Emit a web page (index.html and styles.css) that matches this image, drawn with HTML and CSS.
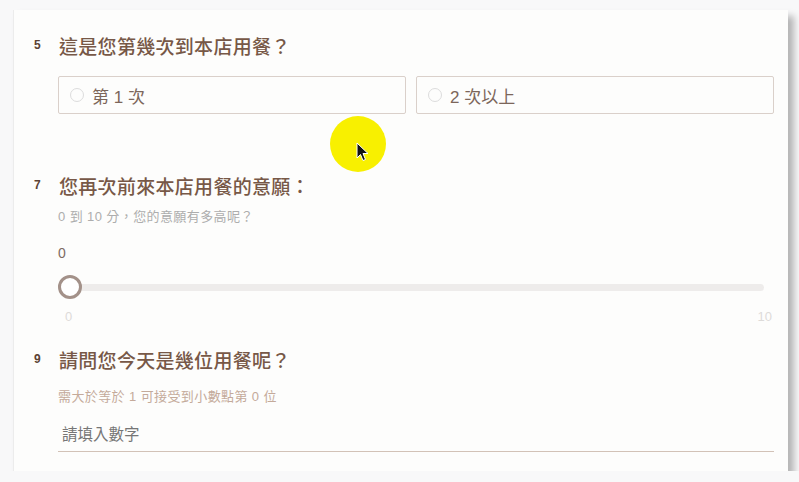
FILE: index.html
```html
<!DOCTYPE html>
<html lang="zh-Hant">
<head>
    <meta charset="UTF-8">
    <meta name="viewport" content="width=device-width, initial-scale=1.0">
    <title>用餐問卷</title>
    <link rel="stylesheet" href="styles.css">
</head>
<body>

    <main class="card">
        <!-- Q5 -->
        <section class="question">
            <div class="q-head">
                <span class="q-num">5</span>
                <h2 class="q-title">這是您第幾次到本店用餐？</h2>
            </div>
            <div class="q-body">
                <div class="options">
                    <label class="option"><span class="radio"></span>第 1 次</label>
                    <label class="option option-wide"><span class="radio"></span>2 次以上</label>
                </div>
            </div>
        </section>

        <!-- Q7 -->
        <section class="question q-slider">
            <div class="q-head">
                <span class="q-num">7</span>
                <h2 class="q-title">您再次前來本店用餐的意願：</h2>
            </div>
            <div class="q-body">
                <p class="q-hint">0 到 10 分，您的意願有多高呢？</p>
                <div class="slider-value">0</div>
                <div class="slider">
                    <div class="slider-track"></div>
                    <div class="slider-thumb"></div>
                </div>
                <div class="slider-labels">
                    <span>0</span>
                    <span>10</span>
                </div>
            </div>
        </section>

        <!-- Q9 -->
        <section class="question q-number">
            <div class="q-head">
                <span class="q-num">9</span>
                <h2 class="q-title">請問您今天是幾位用餐呢？</h2>
            </div>
            <div class="q-body">
                <p class="q-hint q-hint-warm">需大於等於 1 可接受到小數點第 0 位</p>
                <div class="number-input">請填入數字</div>
            </div>
        </section>

        <!-- click highlight from the screen recording -->
        <div class="click-spot">
            <svg class="cursor" width="14" height="20" viewBox="0 0 14 20">
                <path d="M1 1 L1 16 L4.5 12.5 L7 18.5 L9.5 17.5 L7 11.5 L12 11.5 Z" fill="#111" stroke="#fff" stroke-width="1"/>
            </svg>
        </div>
    </main>

</body>
</html>
```

FILE: styles.css
```css
:root {
    --title-color: #775847;
    --num-color: #5b4234;
    --option-text: #7c665a;
    --border-color: #dad0ca;
    --hint-color: #adadad;
    --hint-warm: #c4aa9a;
    --track-color: #eeeceb;
    --thumb-color: #a39189;
}

body {
    margin: 0;
    background: #f8f8f9;
    font-family: "Liberation Sans", "Noto Sans CJK TC", sans-serif;
}

.card {
    position: relative;
    width: 775px;
    height: 461px;
    box-sizing: border-box;
    margin: 10px 0 0 13px;
    padding: 21px 14px 0 20px;
    background: #fdfdfc;
    border-left: 1px solid #ececec;
    box-shadow: 6px 6px 7px rgba(0, 0, 0, 0.28);
}

.q-head {
    display: flex;
    align-items: center;
    height: 28px;
}

.q-num {
    width: 25px;
    font-size: 12px;
    font-weight: bold;
    color: var(--num-color);
}

.q-title {
    margin: 0;
    font-size: 19px;
    font-weight: 500;
    letter-spacing: 0.3px;
    color: var(--title-color);
}

.q-body {
    padding-left: 24px;
}

/* options */
.options {
    display: flex;
    gap: 10px;
    margin-top: 17px;
}

.option {
    flex: 348px 0 0;
    display: flex;
    align-items: center;
    box-sizing: border-box;
    height: 38px;
    padding-left: 11px;
    border: 1px solid var(--border-color);
    border-radius: 2px;
    font-size: 17px;
    color: var(--option-text);
}

.option-wide {
    flex: 1;
}

.radio {
    width: 12px;
    height: 12px;
    margin-right: 8px;
    border: 1px solid #dcdcdc;
    border-radius: 50%;
}

/* slider */
.q-slider {
    margin-top: 57px;
}

.q-hint {
    margin: 9px 0 0;
    font-size: 13px;
    line-height: 18px;
    letter-spacing: 0.4px;
    color: var(--hint-color);
}

.q-hint-warm {
    margin-top: 15px;
    color: var(--hint-warm);
}

.slider-value {
    margin-top: 17px;
    font-size: 14px;
    line-height: 20px;
    color: #7d6b62;
}

.slider {
    position: relative;
    display: flex;
    align-items: center;
    height: 24px;
    margin-top: 12px;
    width: 706px;
}

.slider-track {
    flex: 1;
    height: 7px;
    border-radius: 4px;
    background: var(--track-color);
}

.slider-thumb {
    position: absolute;
    left: 0;
    top: 0;
    width: 18px;
    height: 18px;
    border: 3px solid var(--thumb-color);
    border-radius: 50%;
    background: #fff;
}

.slider-labels {
    display: flex;
    justify-content: space-between;
    width: 714px;
    margin-top: 10px;
    padding-left: 7px;
    box-sizing: border-box;
    font-size: 13px;
    line-height: 16px;
    color: #dddbd9;
}

/* number input */
.q-number {
    margin-top: 20px;
}

.number-input {
    height: 35px;
    margin-top: 11px;
    padding-left: 4px;
    box-sizing: border-box;
    border-bottom: 1px solid #d2c2b7;
    font-size: 15.5px;
    line-height: 36px;
    color: #767676;
}

/* click highlight overlay */
.click-spot {
    position: absolute;
    left: 316px;
    top: 106px;
    width: 56px;
    height: 56px;
    border-radius: 50%;
    background: #f8f000;
}

.cursor {
    position: absolute;
    left: 26px;
    top: 26px;
}
```
